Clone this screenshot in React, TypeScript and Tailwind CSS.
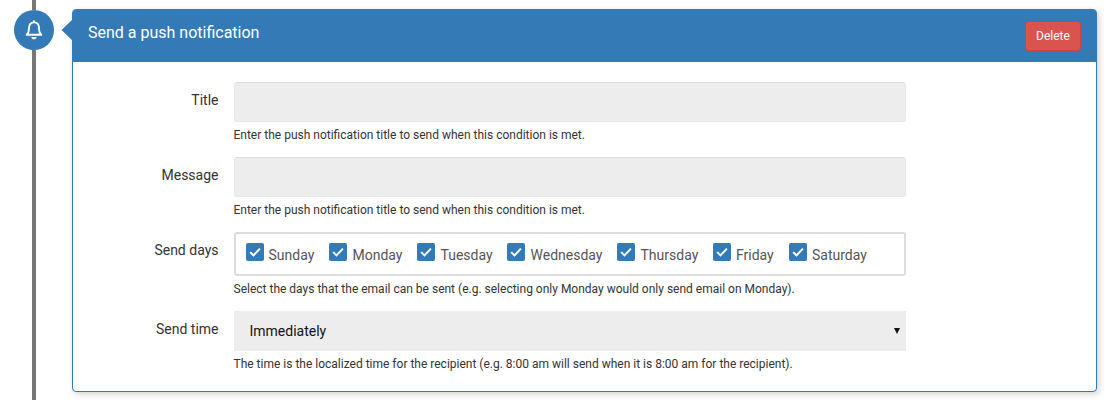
import type { ReactNode } from "react";

const days = [
  { name: "Sunday", width: "w-[83px]", gap: "ml-[4.5px]" },
  { name: "Monday", width: "w-[88px]", gap: "ml-[5.5px]" },
  { name: "Tuesday", width: "w-[90px]", gap: "ml-[5.5px]" },
  { name: "Wednesday", width: "w-[110px]", gap: "ml-[5.5px]" },
  { name: "Thursday", width: "w-[96px]", gap: "ml-[5.5px]" },
  { name: "Friday", width: "w-[76px]", gap: "ml-[5px]" },
  { name: "Saturday", width: "w-[90px]", gap: "ml-[5px]" },
];

function BellIcon() {
  return (
    <svg className="h-5 w-[18px]" viewBox="0 0 18 20" fill="none" stroke="white" strokeWidth="1.9">
      <path d="M1.7 14.8c1.9-1.6 2.3-3.2 2.3-6.8 0-3.4 1.9-5.6 5-5.6s5 2.2 5 5.6c0 3.6.4 5.2 2.3 6.8Z" strokeLinejoin="round" />
      <path d="M9 0.2a1.1 1.1 0 0 1 1.1 1.1v1.3H7.9V1.3A1.1 1.1 0 0 1 9 .2Z" fill="white" stroke="none" />
      <path d="M6.3 16.9h5.4c-.4 1.6-1.3 2.4-2.7 2.4s-2.3-.8-2.7-2.4Z" fill="white" stroke="none" />
    </svg>
  );
}

function Checkbox() {
  return (
    <span className="mt-[9px] flex size-[18px] shrink-0 items-center justify-center rounded-[2px] bg-[#337ab7]">
      <svg className="size-[18px]" viewBox="0 0 18 18" fill="none" stroke="white" strokeWidth="2">
        <path d="m4.2 9.1 3.3 3.3 6.4-6.8" />
      </svg>
    </span>
  );
}

function Field({ label, help, height, children }: { label: string; help: string; height: string; children: ReactNode }) {
  return (
    <div className={`flex ${height}`}>
      <div className="w-[146px] shrink-0 pr-[0.5px] pt-2 text-right text-[14px] leading-5">{label}</div>
      <div className="ml-[15px] w-[672px]">
        {children}
        <p className="-ml-[0.5px] mt-[5px] whitespace-nowrap text-[12px] leading-[17px]">{help}</p>
      </div>
    </div>
  );
}

function TextInput() {
  return <input readOnly className="block h-10 w-full rounded-[3px] border border-[#e8e8e8] border-t-[#dedede] bg-[#ededed] px-4 outline-none" />;
}

export default function App() {
  return (
    <div className="flex h-[400px] w-[1107px] overflow-hidden bg-white font-[Roboto,sans-serif] text-[#333]">
      <div className="flex w-[68px] shrink-0 flex-col items-center">
        <div className="h-2.5 w-1 bg-[#777]" />
        <div className="flex size-10 shrink-0 items-center justify-center rounded-full bg-[#337ab7]">
          <BellIcon />
        </div>
        <div className="w-1 grow bg-[#777]" />
      </div>
      <section className="relative ml-1 mt-[9px] h-[383px] w-[1025px] rounded-[4px] border border-[#337ab7] bg-white shadow-[2px_2px_6px_rgba(0,0,0,0.18)]">
        <svg className="absolute -left-3 top-[9px] h-[22px] w-3" viewBox="0 0 12 22">
          <path d="M12 0v22L0.5 11Z" fill="#337ab7" />
        </svg>
        <header className="flex h-[52px] items-start justify-between rounded-t-[2px] bg-[#337ab7] pl-[15px] pr-[15px] text-white">
          <h3 className="mt-[14px] text-[16px] font-normal leading-[18px]">Send a push notification</h3>
          <button className="mt-[11px] h-[30px] w-14 rounded-[3px] border border-[#d43f3a] bg-[#d9534f] text-[12px] leading-[18px]">Delete</button>
        </header>
        <div className="pt-5">
          <Field label="Title" height="h-[75px]" help="Enter the push notification title to send when this condition is met.">
            <TextInput />
          </Field>
          <Field label="Message" height="h-[75px]" help="Enter the push notification title to send when this condition is met.">
            <TextInput />
          </Field>
          <Field label="Send days" height="h-[79px]" help="Select the days that the email can be sent (e.g. selecting only Monday would only send email on Monday).">
            <div className="flex h-11 rounded-[3px] border-2 border-[#ddd] pl-2.5">
              {days.map((day) => (
                <label key={day.name} className={`flex shrink-0 text-[14px] text-[#555] ${day.width}`}>
                  <Checkbox />
                  <span className={`mt-[11px] leading-5 ${day.gap}`}>{day.name}</span>
                </label>
              ))}
            </div>
          </Field>
          <Field label="Send time" height="h-[75px]" help="The time is the localized time for the recipient (e.g. 8:00 am will send when it is 8:00 am for the recipient).">
            <div className="flex h-10 items-center justify-between bg-[#ededed] pl-[15.5px] pr-1.5 text-[14px] leading-5 text-[#111]">
              <span>Immediately</span>
              <svg className="h-1.5 w-1.5" viewBox="0 0 6 6">
                <path d="M0 0h6L3 6Z" fill="#111" />
              </svg>
            </div>
          </Field>
        </div>
      </section>
    </div>
  );
}
